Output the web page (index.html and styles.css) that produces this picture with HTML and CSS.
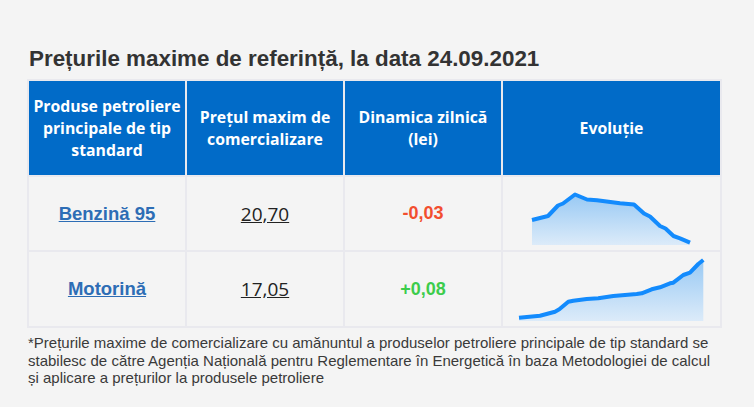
FILE: index.html
```html
<!DOCTYPE html>
<html lang="ro">
<head>
<meta charset="utf-8">
<title>Prețurile maxime de referință</title>
<link rel="stylesheet" href="styles.css">
</head>
<body>
<div class="wrap">
  <h2 class="title">Prețurile maxime de referință, la data 24.09.2021</h2>
  <table class="prices">
    <colgroup>
      <col class="c-prod"><col class="c-price"><col class="c-dyn"><col class="c-evo">
    </colgroup>
    <thead>
      <tr>
        <th>Produse petroliere principale de tip standard</th>
        <th>Prețul maxim de comercializare</th>
        <th>Dinamica zilnică (lei)</th>
        <th>Evoluție</th>
      </tr>
    </thead>
    <tbody>
      <tr class="r1">
        <td><a class="prod" href="#">Benzină 95</a></td>
        <td><a class="price" href="#">20,70</a></td>
        <td><span class="dyn down">-0,03</span></td>
        <td class="evo">
          <svg class="spark" width="163" height="65" viewBox="0 0 163 65">
            <defs>
              <linearGradient id="g1" x1="0" y1="0" x2="0" y2="1">
                <stop offset="0" stop-color="#98c9f4"/>
                <stop offset="1" stop-color="#dcebf9"/>
              </linearGradient>
            </defs>
            <polygon fill="url(#g1)" points="2,39 18,35 28,24.5 33,22.5 45,13.5 57,18.5 67,19.3 90,22.3 104,23.5 114,32.5 120,35.5 130,45 135.5,47.5 143.5,55 150,57.3 160,61.7 160,64 2,64"/>
            <polyline fill="none" stroke="#138bfd" stroke-width="4" stroke-linejoin="round" points="2,39 18,35 28,24.5 33,22.5 45,13.5 57,18.5 67,19.3 90,22.3 104,23.5 114,32.5 120,35.5 130,45 135.5,47.5 143.5,55 150,57.3 160,61.7"/>
          </svg>
        </td>
      </tr>
      <tr class="r2">
        <td><a class="prod" href="#">Motorină</a></td>
        <td><a class="price" href="#">17,05</a></td>
        <td><span class="dyn up">+0,08</span></td>
        <td class="evo">
          <svg class="spark" width="189" height="66" viewBox="0 0 189 66">
            <defs>
              <linearGradient id="g2" x1="0" y1="0" x2="0" y2="1">
                <stop offset="0" stop-color="#98c9f4"/>
                <stop offset="1" stop-color="#dcebf9"/>
              </linearGradient>
            </defs>
            <polygon fill="url(#g2)" points="2,61.7 23,59.7 38,55.7 42.3,53.3 51.3,45.7 56.3,44.7 69.7,43 81.3,42.3 96.3,40 119.7,38 124.7,37.3 134.7,33.3 143,31.3 153,27.3 156.3,26.7 166.3,19 173,16.7 181.3,8 186.3,4 186.3,65 2,65"/>
            <polyline fill="none" stroke="#138bfd" stroke-width="4" stroke-linejoin="round" points="2,61.7 23,59.7 38,55.7 42.3,53.3 51.3,45.7 56.3,44.7 69.7,43 81.3,42.3 96.3,40 119.7,38 124.7,37.3 134.7,33.3 143,31.3 153,27.3 156.3,26.7 166.3,19 173,16.7 181.3,8 186.3,4"/>
          </svg>
        </td>
      </tr>
    </tbody>
  </table>
  <p class="note">*Prețurile maxime de comercializare cu amănuntul a produselor petroliere principale de tip standard se stabilesc de către Agenția Națională pentru Reglementare în Energetică în baza Metodologiei de calcul și aplicare a prețurilor la produsele petroliere</p>
</div>
</body>
</html>
```

FILE: styles.css
```css
html, body {
  margin: 0;
  padding: 0;
  background: #f4f4f4;
}

.wrap {
  padding: 46px 0 0 27px;
  width: 695px;
}

.title {
  margin: 0 0 7px 2px;
  font-family: "Liberation Sans", Arial, sans-serif;
  font-weight: bold;
  font-size: 22.4px;
  line-height: 26px;
  color: #333333;
}

.prices {
  border-collapse: separate;
  border-spacing: 2px;
  background: #e9e9ee;
  table-layout: fixed;
  width: 695px;
}

.c-prod, .c-price, .c-dyn { width: 156px; }
.c-evo { width: 217px; }

.prices th {
  background: #016bc8;
  color: #ffffff;
  font-family: "Open Sans", sans-serif;
  font-weight: 700;
  font-size: 15.8px;
  line-height: 22px;
  height: 94px;
  padding: 0 4px;
  box-sizing: border-box;
  text-align: center;
  vertical-align: middle;
}

.prices td {
  background: #f4f4f4;
  text-align: center;
  vertical-align: middle;
  padding: 0;
}

.r1 td { height: 73px; }
.r2 td { height: 74px; }

.prod {
  font-family: "Liberation Sans", Arial, sans-serif;
  font-weight: bold;
  font-size: 18.5px;
  color: #2d6db5;
  text-decoration: underline;
}

.price {
  font-family: "Open Sans", sans-serif;
  font-size: 19px;
  color: #222222;
  text-decoration: underline;
}

.dyn {
  font-family: "Liberation Sans", Arial, sans-serif;
  font-weight: bold;
  font-size: 18px;
}

.down { color: #f24e2f; }
.up { color: #3ccc4c; }

.spark {
  display: block;
  margin: 0 auto;
}

.note {
  margin: 6px 0 0 1px;
  font-family: "Liberation Sans", Arial, sans-serif;
  font-size: 15px;
  line-height: 17.5px;
  color: #3a3a3a;
}
```
